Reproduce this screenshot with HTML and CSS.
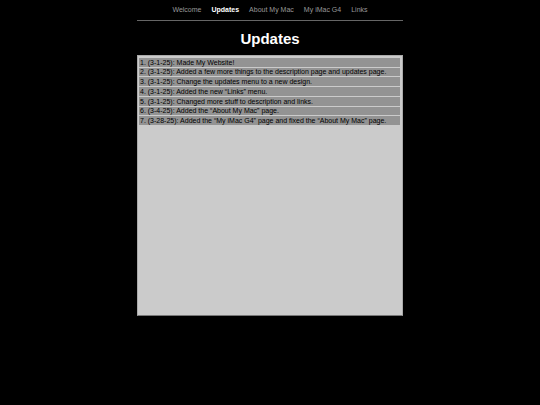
FILE: index.html
```html
<!DOCTYPE html>
<html lang="en">
<head>
  <meta charset="UTF-8">
  <meta name="viewport" content="width=device-width, initial-scale=1.0">
  <title>Updates</title>
  <link rel="stylesheet" href="styles.css">
</head>
<body>
  <div class="page">
    <nav class="menu">
      <a href="#">Welcome</a>
      <a href="#" class="current">Updates</a>
      <a href="#">About My Mac</a>
      <a href="#">My iMac G4</a>
      <a href="#">Links</a>
    </nav>
    <h1>Updates</h1>
    <div class="updates">
      <div class="list">
        <p>1. (3-1-25): Made My Website!</p>
        <p>2. (3-1-25): Added a few more things to the description page and updates page.</p>
        <p>3. (3-1-25): Change the updates menu to a new design.</p>
        <p>4. (3-1-25): Added the new “Links” menu.</p>
        <p>5. (3-1-25): Changed more stuff to description and links.</p>
        <p>6. (3-4-25): Added the “About My Mac” page.</p>
        <p>7. (3-28-25): Added the “My iMac G4” page and fixed the “About My Mac” page.</p>
      </div>
    </div>
  </div>
</body>
</html>
```

FILE: styles.css
```css
body {
  margin: 0;
  background-color: #000;
  font-family: Arial, "Liberation Sans", sans-serif;
}
.page {
  max-width: 266px;
  margin: 0 auto;
}
.menu {
  display: flex;
  justify-content: center;
  gap: 10px;
  padding: 5px 0;
  border-bottom: 1px solid #666;
  font-size: 7px;
  line-height: 10px;
}
.menu a {
  color: #999;
  text-decoration: none;
  white-space: nowrap;
}
.menu a.current {
  color: #fff;
  font-weight: bold;
}
h1 {
  margin: 9px 0 7px;
  color: #fff;
  font-size: 15px;
  line-height: 18px;
  text-align: center;
}
.updates {
  box-sizing: border-box;
  min-height: 261px;
  padding: 2px 2px 2px 1px;
  border: 1px solid #aaa;
  border-bottom-color: #777;
  background-color: #cbcbcb;
}
.list {
  display: grid;
  grid-auto-rows: 1fr;
  gap: 1px;
  min-height: 67px;
}
.list p {
  display: flex;
  align-items: flex-end;
  margin: 0;
  padding: 0 1px;
  background-color: #939393;
  color: #000;
  font-size: 7px;
  line-height: 8px;
}
```
